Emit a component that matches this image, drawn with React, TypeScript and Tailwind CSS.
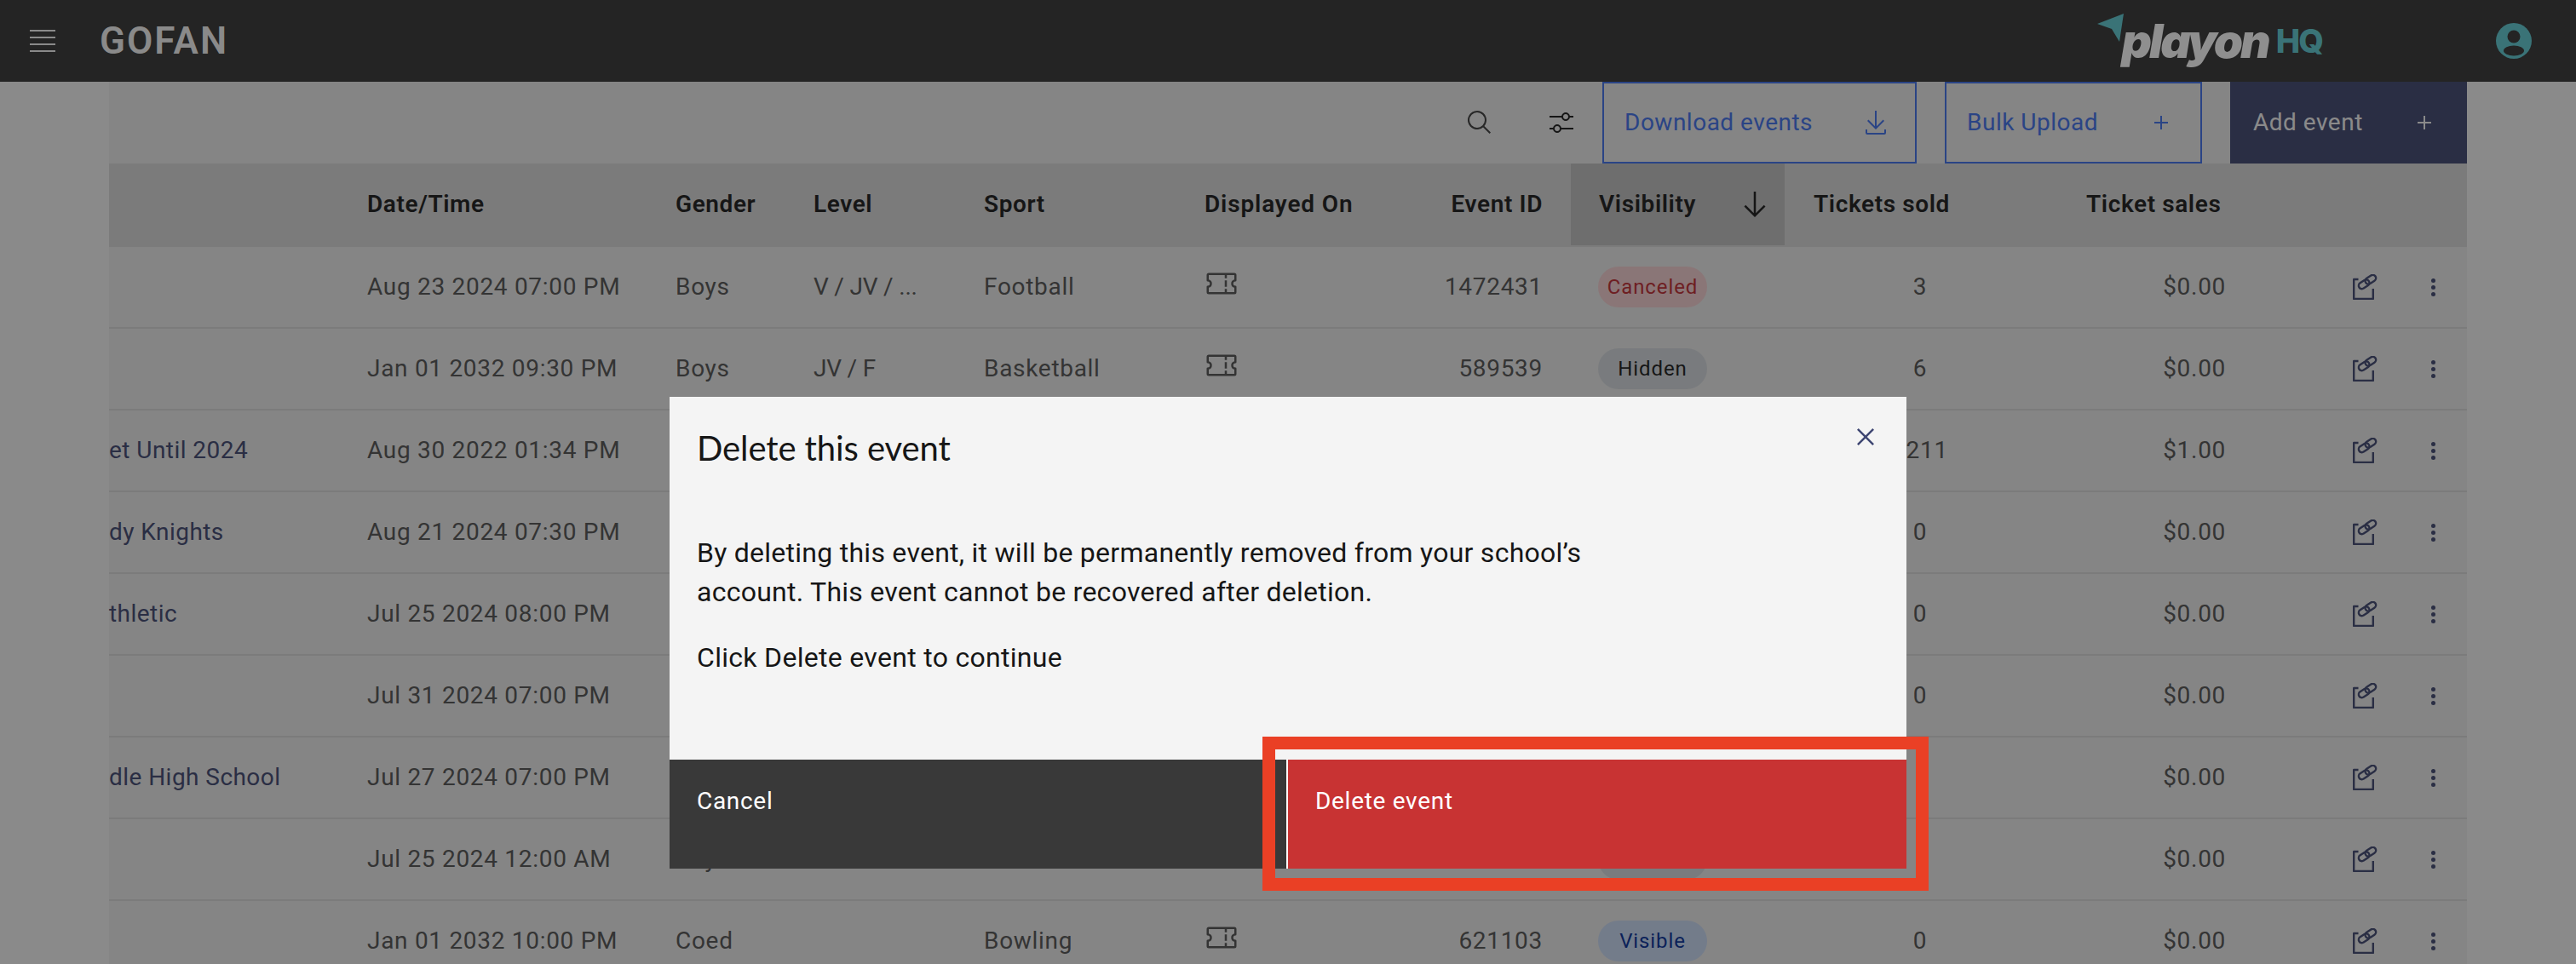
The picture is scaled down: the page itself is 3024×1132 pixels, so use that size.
const rows = [
  { name: '', date: 'Aug 23 2024 07:00 PM', gender: 'Boys', level: 'V / JV / ...', sport: 'Football', shown: true, id: '1472431', status: 'Canceled', sold: '3', sales: '$0.00' },
  { name: '', date: 'Jan 01 2032 09:30 PM', gender: 'Boys', level: 'JV / F', sport: 'Basketball', shown: true, id: '589539', status: 'Hidden', sold: '6', sales: '$0.00' },
  { name: 'et Until 2024', date: 'Aug 30 2022 01:34 PM', gender: '', level: '', sport: '', shown: false, id: '', status: '', sold: '1211', sales: '$1.00' },
  { name: 'dy Knights', date: 'Aug 21 2024 07:30 PM', gender: '', level: '', sport: '', shown: false, id: '', status: '', sold: '0', sales: '$0.00' },
  { name: 'thletic', date: 'Jul 25 2024 08:00 PM', gender: '', level: '', sport: '', shown: false, id: '', status: '', sold: '0', sales: '$0.00' },
  { name: '', date: 'Jul 31 2024 07:00 PM', gender: '', level: '', sport: '', shown: false, id: '', status: '', sold: '0', sales: '$0.00' },
  { name: 'dle High School', date: 'Jul 27 2024 07:00 PM', gender: '', level: '', sport: '', shown: false, id: '', status: '', sold: '', sales: '$0.00' },
  { name: '', date: 'Jul 25 2024 12:00 AM', gender: 'Boys', level: '', sport: '', shown: false, id: '', status: 'Hidden', sold: '', sales: '$0.00' },
  { name: '', date: 'Jan 01 2032 10:00 PM', gender: 'Coed', level: '', sport: 'Bowling', shown: true, id: '621103', status: 'Visible', sold: '0', sales: '$0.00' },
];

const gridCols = 'grid grid-cols-[303px_362px_162px_200px_259px_246px_184px_251px_354px_291px_156px]';

function Icon({ d, size = 32, className = '' }: { d: string; size?: number; className?: string }) {
  return (
    <svg width={size} height={size} viewBox="0 0 32 32" fill="currentColor" className={className}>
      <path d={d} />
    </svg>
  );
}

const plus = 'M17 15V8h-2v7H8v2h7v7h2v-7h7v-2z';
const download = 'M26 24v4H6v-4H4v4a2 2 0 002 2h20a2 2 0 002-2v-4zM26 14l-1.41-1.41L17 20.17V2h-2v18.17l-7.59-7.58L6 14l10 10 10-10z';
const search = 'M29 27.59l-7.55-7.55a11.02 11.02 0 10-1.41 1.41L27.59 29zM4 13a9 9 0 119 9 9.01 9.01 0 01-9-9z';
const sliders = 'M30 8h-4.1c-.5-2.3-2.5-4-4.9-4s-4.4 1.7-4.9 4H2v2h14.1c.5 2.3 2.5 4 4.9 4s4.4-1.7 4.9-4H30V8zm-9 4c-1.7 0-3-1.3-3-3s1.3-3 3-3 3 1.3 3 3-1.3 3-3 3zM2 24h4.1c.5 2.3 2.5 4 4.9 4s4.4-1.7 4.9-4H30v-2H15.9c-.5-2.3-2.5-4-4.9-4s-4.4 1.7-4.9 4H2v2zm9-4c1.7 0 3 1.3 3 3s-1.3 3-3 3-3-1.3-3-3 1.3-3 3-3z';
const arrowDown = 'M24.59 16.59L17 24.17V4h-2v20.17l-7.59-7.58L6 18l10 10 10-10-1.41-1.41z';
const closeX = 'M24 9.4L22.6 8 16 14.6 9.4 8 8 9.4 14.6 16 8 22.6 9.4 24 16 17.4 22.6 24 24 22.6 17.4 16 24 9.4z';
const ticket = 'M29 14a1 1 0 001-1V8a2 2 0 00-2-2H4a2 2 0 00-2 2v5a1 1 0 001 1 2 2 0 010 4 1 1 0 00-1 1v5a2 2 0 002 2h24a2 2 0 002-2v-5a1 1 0 00-1-1 2 2 0 010-4zm-1 5.87V24h-7v-3h-2v3H4v-4.13a4 4 0 000-7.74V8h15v3h2V8h7v4.13a4 4 0 000 7.74zM19 13h2v6h-2z';

function LinkEdit() {
  return (
    <svg width="30" height="30" viewBox="0 0 30 30" fill="none" stroke="#3e4672" strokeWidth="2.4" className="shrink-0">
      <path d="M6.5 6H1.2v23h22.6V17" strokeLinejoin="round" />
      <g transform="rotate(-33 17 9)">
        <rect x="5.5" y="5.5" width="13.5" height="7.5" rx="3.75" />
        <rect x="15" y="5" width="13.5" height="7.5" rx="3.75" />
      </g>
    </svg>
  );
}

function Pill({ status }: { status: string }) {
  if (!status) return null;
  const tone =
    status === 'Canceled'
      ? 'bg-[#ffd7d9] text-[#c6282f]'
      : status === 'Visible'
        ? 'bg-[#d0e2ff] text-[#002d9c]'
        : 'bg-[#dde1e6] text-[#161616]';
  return (
    <span className={`flex h-[48px] w-[128px] items-center justify-center rounded-full text-[24px] tracking-[0.9px] ${tone}`}>
      {status}
    </span>
  );
}

function OutlineButton({ label, icon, width }: { label: string; icon: string; width: string }) {
  return (
    <button className={`flex h-[96px] items-center justify-between border-2 border-[#3f72f5] pl-[24px] pr-[30px] text-[28px] tracking-[0.5px] text-[#3f72f5] ${width}`}>
      {label}
      <Icon d={icon} />
    </button>
  );
}

export default function App() {
  return (
    <div className="relative h-[1132px] w-[3024px] overflow-hidden bg-white font-['Roboto',sans-serif] text-[28px] tracking-[0.7px] text-[#525252]">
      <header className="relative z-10 flex h-[96px] items-center bg-[#242424] pl-[35px] pr-[52px] text-[#8a8a8a]">
        <div className="flex w-[30px] flex-col gap-[6px]">
          <span className="h-[2px] bg-[#8a8a8a]" />
          <span className="h-[2px] bg-[#8a8a8a]" />
          <span className="h-[2px] bg-[#8a8a8a]" />
          <span className="h-[2px] bg-[#8a8a8a]" />
        </div>
        <span className="ml-[52px] text-[44px] font-semibold tracking-[2px]">GOFAN</span>
        <div className="ml-auto flex items-center">
          <svg width="32" height="34" viewBox="0 0 32 34" className="-mt-[30px] mr-[-3px]">
            <path d="M31 0L0 12l17 6 9 15z" fill="#3a7377" />
          </svg>
          <span className="font-['Inter',sans-serif] text-[55px] font-black italic leading-none tracking-[-3px] text-[#8f8f8f]">playon</span>
          <span className="ml-[9px] font-['Inter',sans-serif] text-[38px] font-extrabold tracking-[-2px] text-[#3a7377]">HQ</span>
        </div>
        <svg width="42" height="42" viewBox="0 0 42 42" className="ml-[204px]">
          <circle cx="21" cy="21" r="21" fill="#3a7377" />
          <circle cx="21" cy="16" r="7.5" fill="#242424" />
          <ellipse cx="21" cy="32.5" rx="12" ry="6" fill="#242424" />
        </svg>
      </header>

      <main className="ml-[128px] w-[2768px] bg-[#f4f4f4]">
        <div className="flex h-[96px] items-center justify-end gap-[33px]">
          <Icon d={search} className="mr-[32px] text-[#393939]" />
          <Icon d={sliders} className="-ml-[1px] mr-[-1px] text-[#161616]" />
          <OutlineButton label="Download events" icon={download} width="w-[369px]" />
          <OutlineButton label="Bulk Upload" icon={plus} width="w-[302px]" />
          <button className="flex h-[96px] w-[278px] items-center justify-between bg-[#3e4672] pl-[27px] pr-[34px] text-[28px] tracking-[0.5px] text-white">
            Add event
            <Icon d={plus} />
          </button>
        </div>

        <div className={`${gridCols} h-[96px] items-center bg-[#e0e0e0] font-semibold tracking-[0.6px] text-[#161616]`}>
          <span />
          <span>Date/Time</span>
          <span>Gender</span>
          <span>Level</span>
          <span>Sport</span>
          <span className="tracking-[0.85px]">Displayed On</span>
          <span className="pr-[33px] text-right">Event ID</span>
          <span className="flex h-full items-center justify-between bg-[#c6c6c6] pl-[33px] pr-[15px]">
            Visibility
            <Icon d={arrowDown} size={40} />
          </span>
          <span className="pl-[34px]">Tickets sold</span>
          <span>Ticket sales</span>
          <span />
        </div>

        {rows.map((row, i) => (
          <div key={i} className={`${gridCols} h-[96px] items-center border-t-2 border-[#e0e0e0]`}>
            <span className="whitespace-nowrap tracking-[0.45px] text-[#3e4672]">{row.name}</span>
            <span>{row.date}</span>
            <span>{row.gender}</span>
            <span className="tracking-[-0.2px]">{row.level}</span>
            <span>{row.sport}</span>
            <span className="-mt-[8px]">{row.shown && <Icon d={ticket} size={40} className="text-[#525252]" />}</span>
            <span className="pr-[33px] text-right">{row.id}</span>
            <span className="pl-[32px]">
              <Pill status={row.status} />
            </span>
            <span className="w-[318px] text-center">{row.sold}</span>
            <span className="w-[164px] text-right">{row.sales}</span>
            <span className="flex items-center pl-[22px]">
              <LinkEdit />
              <span className="ml-[62px] flex flex-col gap-[3px]">
                <span className="size-[5px] rounded-full bg-[#3e4672]" />
                <span className="size-[5px] rounded-full bg-[#3e4672]" />
                <span className="size-[5px] rounded-full bg-[#3e4672]" />
              </span>
            </span>
          </div>
        ))}
      </main>

      <div className="absolute inset-0 flex justify-center bg-[#161616]/50 pt-[466px]">
        <div className="relative h-[554px] w-[1452px] bg-[#f4f4f4] text-[#161616]">
          <div className="h-[426px] pl-[32px] pt-[34px]">
            <h2 className="font-['Lato',sans-serif] text-[40px] leading-[52px] tracking-[-0.1px]">Delete this event</h2>
            <p className="mt-[74px] w-[1060px] text-[32px] leading-[46px] tracking-[0.26px]">
              By deleting this event, it will be permanently removed from your school’s account. This event cannot be recovered after deletion.
            </p>
            <p className="mt-[31px] text-[32px] leading-[46px] tracking-[0.3px]">Click Delete event to continue</p>
          </div>
          <div className="flex h-[128px] text-white">
            <button className="w-[724px] bg-[#393939] pb-[68px] pl-[32px] pt-[28px] text-left">Cancel</button>
            <button className="w-[728px] border-l-2 border-white bg-[#c83333] pb-[68px] pl-[32px] pt-[28px] text-left">Delete event</button>
          </div>
          <Icon d={closeX} size={40} className="absolute right-[28px] top-[27px] text-[#3e4672]" />
        </div>
      </div>

      <div className="absolute left-[1482px] top-[865px] h-[181px] w-[782px] border-[15px] border-[#ea4025]" />
    </div>
  );
}
